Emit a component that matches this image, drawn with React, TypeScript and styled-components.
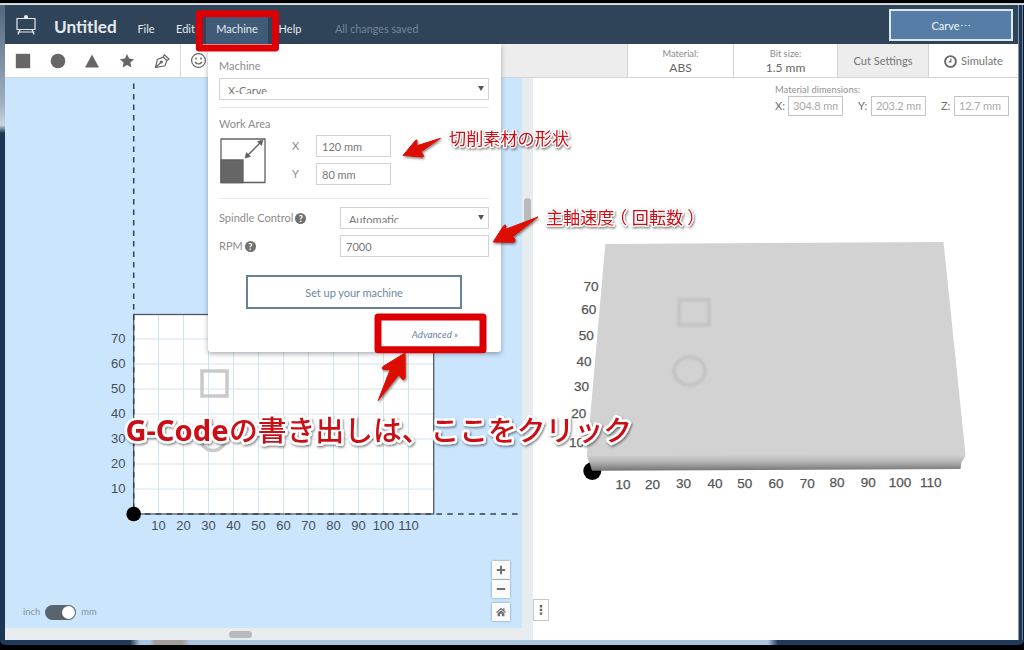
import React from "react";
import styled, { createGlobalStyle, css } from "styled-components";

const GlobalStyle = createGlobalStyle`
  * { box-sizing: border-box; }
  body { margin: 0; background: #000; overflow: hidden; }
`;

const Desktop = styled.div`
  position: relative;
  width: 1024px;
  height: 650px;
  padding: 3px 0 5px;
  background: #000;
  font-family: Lato, sans-serif;
  color: #777;
`;

const WindowFrame = styled.div`
  height: 642px;
  padding: 2px 6px 5px 5px;
  border-radius: 0 0 5px 5px;
  background:
    linear-gradient(#b9c6d0, #e2e6e8) top / 100% 2px no-repeat,
    linear-gradient(90deg, #1f3a5a 0 130px, #a9c5e3 140px 150px, #a39c9a 155px 182px, #a9c5e3 190px 768px, #1f3a5a 778px) bottom / 100% 5px no-repeat,
    linear-gradient(#50667c, #9db0c0 100px, #cbd5dc 122px, #1c3654 130px) left / 5px 100% no-repeat,
    linear-gradient(90deg, #8199b3 0 1px, #1c3654 1px 4px, #6f87a2 4px 5px, #0b1728 5px) right / 6px 100% no-repeat;
`;

const AppWindow = styled.div`
  display: flex;
  flex-direction: column;
  height: 635px;
  background: #fff;
`;

const Header = styled.header`
  display: flex;
  align-items: center;
  height: 39px;
  padding: 0 5px 0 11px;
  background: #2f4359;
  color: #e4e9ee;
`;

const ProjectTitle = styled.h1`
  width: 73px;
  margin: 5px 0 0 18px;
  font-size: 17.2px;
  font-weight: 700;
  line-height: 22px;
  white-space: nowrap;
`;

const MenuItem = styled.div<{ $width: number; $open?: boolean }>`
  position: relative;
  width: ${(p) => p.$width}px;
  height: 27px;
  margin-top: 12px;
  font-size: 11px;
  line-height: 23px;
  text-align: center;
  background: ${(p) => (p.$open ? "#3f5b78" : "transparent")};
`;

const SaveState = styled.span`
  flex: 1;
  margin: 8px 0 0 23px;
  font-size: 10.8px;
  color: #72869b;
`;

const CarveButton = styled.button`
  width: 124px;
  height: 32px;
  padding: 2px 0 0;
  border: 2px solid #dfe7ee;
  background: #557da5;
  color: #f3f6f9;
  font: 11px Lato, sans-serif;
`;

const Toolbar = styled.div`
  display: flex;
  height: 34px;
  border-bottom: 1px solid #d4d4d4;
  background: #ededed;
`;

const ToolGroup = styled.div<{ $width: number }>`
  display: flex;
  align-items: center;
  gap: 18.7px;
  width: ${(p) => p.$width}px;
  padding: 1px 0 0 10px;
  border-right: 1px solid #d8d8d8;
  background: #fff;
  svg { flex: none; }
`;

const Filler = styled.div`
  flex: 1;
`;

const InfoCell = styled.div<{ $width: number; $muted?: boolean }>`
  display: flex;
  flex-direction: column;
  align-items: center;
  justify-content: center;
  width: ${(p) => p.$width}px;
  padding-top: 1px;
  border-left: 1px solid #d4d4d4;
  background: ${(p) => (p.$muted ? "#ededed" : "#fff")};
  font-size: 11.1px;
  line-height: 14px;
  color: #757575;
`;

const CellCaption = styled.span`
  font-size: 9.3px;
  color: #8a8a8a;
`;

const CellValue = styled.span`
  font-size: 12px;
  color: #666;
`;

const InlineLabel = styled.span`
  display: flex;
  align-items: center;
  gap: 4px;
`;

const Workspace = styled.main`
  display: flex;
  height: 562px;
`;

const DesignPane = styled.section`
  display: grid;
  grid-template: 550px 12px / 517px 11px;
  width: 528px;
  background: #e8ecef;
`;

const Canvas = styled.div`
  position: relative;
  background: #cbe5fd;
  svg { display: block; }
`;

const Track = styled.div<{ $vertical?: boolean }>`
  ${(p) =>
    p.$vertical
      ? css`padding: 120px 2px 0;`
      : css`padding: 3px 0 0 224px;`}
`;

const Thumb = styled.div<{ $vertical?: boolean }>`
  width: ${(p) => (p.$vertical ? 7 : 23)}px;
  height: ${(p) => (p.$vertical ? 25 : 7)}px;
  border-radius: 4px;
  background: #b8babc;
`;

const UnitSwitch = styled.div`
  position: absolute;
  left: 18px;
  bottom: 7px;
  display: flex;
  align-items: center;
  gap: 5px;
  height: 18px;
  font-size: 9.4px;
  line-height: 16px;
  color: #8894a0;
`;

const Pill = styled.span`
  display: flex;
  justify-content: flex-end;
  align-items: center;
  width: 31px;
  height: 15px;
  padding-right: 1.5px;
  border-radius: 8px;
  background: #59646e;
`;

const Knob = styled.span`
  width: 13px;
  height: 13px;
  border-radius: 50%;
  background: #fff;
`;

const ZoomControls = styled.div`
  position: absolute;
  right: 12px;
  bottom: 7px;
  display: flex;
  flex-direction: column;
  width: 18px;
`;

const ZoomButton = styled.button<{ $gap?: number }>`
  display: flex;
  align-items: center;
  justify-content: center;
  width: 18px;
  height: 18px;
  margin: 0 0 ${(p) => p.$gap ?? 0}px;
  padding: 0;
  border: 0;
  background: #fafafa;
  box-shadow: 0 0 2px rgba(70, 85, 100, 0.65);
`;

const PreviewPane = styled.section`
  position: relative;
  flex: 1;
  background: #fff;
`;

const Scene = styled.svg`
  display: block;
  width: 485px;
  height: 430px;
`;

const Dimensions = styled.div`
  height: 52px;
  padding: 6px 9px 0 242px;
  font-size: 9.4px;
  line-height: 12px;
  color: #929292;
`;

const DimensionRow = styled.div`
  display: flex;
  justify-content: space-between;
`;

const Dimension = styled.label`
  display: flex;
  align-items: center;
  justify-content: space-between;
  width: 68px;
  font-size: 11px;
  color: #707070;
`;

const DimensionBox = styled.span`
  width: 55px;
  height: 20px;
  padding-left: 4px;
  border: 1px solid #c4c4c4;
  font-size: 11px;
  line-height: 18px;
  letter-spacing: -0.1px;
  color: #aaa;
  white-space: nowrap;
  span { display: block; width: 45px; overflow: hidden; }
`;

const PanelHandle = styled.button`
  position: absolute;
  left: 0;
  bottom: 19px;
  display: flex;
  align-items: center;
  justify-content: center;
  width: 16px;
  height: 22px;
  padding: 0;
  border: 1px solid #c9c9c9;
  background: #fff;
`;

const MachineMenu = styled.div`
  position: absolute;
  z-index: 2;
  top: 27px;
  left: 2px;
  width: 293px;
  height: 308px;
  padding: 0 12px 0 11px;
  border-radius: 0 0 3px 3px;
  background: #fff;
  box-shadow: 0 2px 5px rgba(40, 55, 75, 0.4);
  color: #8c8c8c;
  font-size: 11px;
  line-height: 14px;
  text-align: left;
`;

const GroupLabel = styled.div<{ $height: number; $top: number }>`
  display: flex;
  align-items: center;
  height: ${(p) => p.$height}px;
  padding-top: ${(p) => p.$top}px;
`;

const Rule = styled.hr<{ $top: number; $bottom: number }>`
  height: 1px;
  margin: ${(p) => p.$top}px 0 ${(p) => p.$bottom}px;
  border: 0;
  background: #e9e9e9;
`;

const Field = styled.div<{ $width: number }>`
  width: ${(p) => p.$width}px;
  height: 22px;
  padding-left: 5px;
  border: 1px solid #d2d2d2;
  font-size: 11px;
  line-height: 21px;
  color: #777;
`;

const SelectField = styled(Field)`
  display: flex;
  justify-content: space-between;
  padding: 5px 4px 0 8px;
  color: #777;
`;

const SelectText = styled.span`
  height: 10px;
  overflow: hidden;
  line-height: 14px;
`;

const Caret = styled.span`
  width: 0;
  height: 0;
  margin-top: 2px;
  border: 3px solid transparent;
  border-top: 5px solid #555;
  border-bottom: 0;
`;

const AreaRow = styled.div`
  display: flex;
  height: 50px;
  padding-left: 1px;
`;

const AreaFields = styled.div`
  display: grid;
  grid-template-columns: 24px 75px;
  align-items: center;
  gap: 6px 0;
  margin-left: 26px;
`;

const SpindleGrid = styled.div`
  display: grid;
  grid-template-columns: 121px 149px;
  row-gap: 6px;
  align-items: center;
`;

const HelpBadge = styled.span`
  width: 11px;
  height: 11px;
  border-radius: 50%;
  background: #707070;
  color: #fff;
  font-size: 9px;
  font-weight: 900;
  line-height: 11px;
  text-align: center;
`;

const HelpLabel = styled.span`
  display: flex;
  align-items: center;
  gap: 2px;
`;

const SetupButton = styled.button`
  display: block;
  width: 216px;
  height: 34px;
  margin: 18px 0 0 27px;
  padding: 0;
  border: 2px solid #64829c;
  background: #fff;
  color: #6c88a2;
  font: 11px Lato, sans-serif;
  letter-spacing: -0.04px;
`;

const AdvancedLink = styled.div`
  margin: 18px 31px 0 0;
  font-size: 9.8px;
  font-style: italic;
  text-align: right;
  color: #6a869e;
`;

const Annotations = styled.svg`
  position: absolute;
  z-index: 5;
  inset: 0;
  pointer-events: none;
`;

const Note = styled.text`
  font-family: "Noto Sans", "Noto Sans CJK JP", sans-serif;
  fill: #cb1118;
  stroke: #fff;
  stroke-linejoin: round;
  paint-order: stroke;
`;

const rulerX = [10, 20, 30, 40, 50, 60, 70, 80, 90, 100, 110];
const rulerY = [10, 20, 30, 40, 50, 60, 70];

const sceneX: [number, number, number][] = [
  [10, 623, 489.5], [20, 652.5, 489.3], [30, 683.5, 489], [40, 715, 489], [50, 744.7, 488.6], [60, 776, 488.4],
  [70, 807.3, 488.2], [80, 837, 488], [90, 868.3, 487.8], [100, 900, 487.5], [110, 930.7, 487.3],
];
const sceneY: [number, number, number][] = [
  [70, 591.5, 291], [60, 589.2, 314.5], [50, 586.8, 340], [40, 584.4, 366], [30, 582, 391.5], [20, 579.2, 418.5], [10, 577, 447],
];

function Logo() {
  return (
    <svg width="20" height="22" viewBox="0 0 20 22" fill="none" stroke="#e4e9ee" strokeWidth="1.2">
      <path d="M1 4.5h18v11H1z M8 4.5c.8-.3.8-2 1-2.6h2c.2.6.2 2.3 1 2.6 M1.5 18h17M4 15.5l-2 5M16 15.5l2 5" />
      <path d="M8.5 3.5h3" strokeWidth="3" />
    </svg>
  );
}

function ShapeTools() {
  return (
    <ToolGroup $width={176}>
      <svg width="16" height="16"><path fill="#666" d="M.8.8h14.4v14.4H.8z" /></svg>
      <svg width="16" height="16"><circle cx="8" cy="8" r="7.3" fill="#666" /></svg>
      <svg width="16" height="16"><path fill="#666" d="M8 1.5 15 14.5H1z" /></svg>
      <svg width="16" height="16"><path fill="#666" d="m8 1 2.1 4.6 5 .6-3.7 3.4 1 5L8 12.1l-4.4 2.5 1-5L.9 6.2l5-.6z" /></svg>
      <svg width="16" height="16" fill="none" stroke="#666" strokeWidth="1.2">
        <path d="M1.5 14.5 3.4 6.4 9.3 4 10.3 1.7 15 6 12.8 7.7 11 12.8z M9.3 4l3.5 3.7 M1.5 14.5l5-4.8" />
        <circle cx="7.3" cy="9" r="1" fill="#666" />
      </svg>
    </ToolGroup>
  );
}

function DesignCanvas() {
  return (
    <svg width="517" height="550" viewBox="5 78 517 550" fontFamily="Liberation Sans, sans-serif" fontSize="13" fill="#454f59">
      <rect x="134" y="314.5" width="300" height="200" fill="#fff" />
      <g stroke="#d3e4ef">
        {rulerX.map((v) => <path key={v} d={`M${133.5 + v * 2.5} 315v199`} />)}
        {rulerY.map((v) => <path key={v} d={`M134 ${514 - v * 2.5}h300`} />)}
      </g>
      <rect x="133.7" y="314.5" width="300" height="199.5" fill="none" stroke="#4b5967" strokeWidth="1.3" />
      <path d="M133.7 83.5V514" stroke="#35414e" strokeWidth="1.5" strokeDasharray="5.5 5" />
      <path d="M134 514h388" stroke="#35414e" strokeWidth="1.7" strokeDasharray="5.6 5.2" />
      <rect x="202" y="371" width="25" height="25" fill="none" stroke="#c9c9c9" strokeWidth="3.5" />
      <circle cx="213" cy="438" r="12.5" fill="none" stroke="#c9c9c9" strokeWidth="3.5" />
      {rulerX.map((v) => <text key={v} x={133.5 + v * 2.5} y="529.5" textAnchor="middle">{v}</text>)}
      {rulerY.map((v) => <text key={v} x="125.5" y={518 - v * 2.5} textAnchor="end">{v}</text>)}
      <circle cx="133.7" cy="514" r="7.3" fill="#000" />
    </svg>
  );
}

function BoardScene() {
  return (
    <Scene viewBox="533 130 485 430" fontFamily="Liberation Sans, sans-serif" fontSize="13.5" fill="#555" stroke="#555" strokeWidth=".25">
      <defs>
        <linearGradient id="edge" x1="0" x2="0" y1="0" y2="1">
          <stop offset="0" stopColor="#d2d2d2" />
          <stop offset=".45" stopColor="#b4b4b4" />
          <stop offset="1" stopColor="#737373" />
        </linearGradient>
        <filter id="soft"><feGaussianBlur stdDeviation=".8" /></filter>
      </defs>
      <circle cx="592.3" cy="471" r="9" fill="#000" stroke="none" />
      <path d="M605.3 244 943.5 242 965.5 454.5 960.5 463 592 464 586.8 456z" fill="#d2d2d2" stroke="none" />
      <path d="M586.8 456 965.5 454.5Q965 458 961.5 462L960.5 469 592 470.7 590 464z" fill="url(#edge)" stroke="none" />
      <g fill="none" stroke="#c2c2c2" strokeWidth="3.4" filter="url(#soft)">
        <path d="M679.5 299.7h29.5l.3 25h-30.5z" />
        <ellipse cx="689.6" cy="371" rx="15.5" ry="14" />
      </g>
      {sceneX.map(([v, x, y]) => <text key={v} x={x} y={y - 0.7} textAnchor="middle">{v}</text>)}
      {sceneY.map(([v, x, y]) => <text key={v} x={x - 0.5} y={y - 0.5} textAnchor="middle">{v}</text>)}
    </Scene>
  );
}

function MachinePanel() {
  return (
    <MachineMenu>
      <GroupLabel $height={34} $top={9}>Machine</GroupLabel>
      <SelectField $width={270}><SelectText>X-Carve</SelectText><Caret /></SelectField>
      <Rule $top={7} $bottom={0} />
      <GroupLabel $height={27} $top={5}>Work Area</GroupLabel>
      <AreaRow>
        <svg width="46" height="50" fill="none" stroke="#606060" strokeWidth="1.3">
          <path d="M1 4h44v43.5H1z" />
          <path d="M1 25h22v22.5H1z" fill="#666" />
          <path d="m27 21 14-14" />
          <path d="m25 23 1.5-5.5 4 4zM43 5l-5.5 1.5 4 4z" fill="#606060" strokeWidth=".6" />
        </svg>
        <AreaFields>
          <span>X</span><Field $width={75}>120 mm</Field>
          <span>Y</span><Field $width={75}>80 mm</Field>
        </AreaFields>
      </AreaRow>
      <Rule $top={13} $bottom={8} />
      <SpindleGrid>
        <HelpLabel>Spindle Control <HelpBadge>?</HelpBadge></HelpLabel>
        <SelectField $width={149}><SelectText>Automatic</SelectText><Caret /></SelectField>
        <HelpLabel>RPM <HelpBadge>?</HelpBadge></HelpLabel>
        <Field $width={149}>7000</Field>
      </SpindleGrid>
      <SetupButton>Set up your machine</SetupButton>
      <AdvancedLink>Advanced »</AdvancedLink>
    </MachineMenu>
  );
}

function Callouts() {
  return (
    <Annotations width="1024" height="650">
      <defs>
        <filter id="shade" x="-10%" y="-20%" width="120%" height="150%">
          <feDropShadow dx="1" dy="1.5" stdDeviation="1" floodColor="#000" floodOpacity=".5" />
        </filter>
      </defs>
      <g fill="none" stroke="#dc0005" strokeWidth="7" strokeLinejoin="round">
        <rect x="199.3" y="13.7" width="76.2" height="34.3" />
        <rect x="378" y="317" width="105" height="32.7" />
      </g>
      <g fill="#dd0806" stroke="#dd0806" strokeLinejoin="round" filter="url(#shade)">
        <path d="M403.2 155.3 415.5 140.5Q417 139 417 141L416.8 145.8 440.5 138.3 420.8 151.8 423.2 155Q424 157 422 157.1z" />
        <path d="M493.2 242 503.5 226Q505.5 223.5 506 226.5L505.2 229.5 538 217 512.8 236.5 515 239.5Q515.5 242 513 242.2z" />
        <path d="M405 353 383 366.5Q381 369.3 384.3 369.6L390.3 369.4 378.2 400.5 398.8 374.8 402 379Q405 380.5 405.2 377z" />
      </g>
      <g filter="url(#shade)">
        <Note x="449" y="145" fontSize="17.1" strokeWidth="2.5" textLength="120">切削素材の形状</Note>
        <Note y="223.5" fontSize="17.1" strokeWidth="2.5">
          <tspan x="546">主軸速度</tspan>
          <tspan x="610">（</tspan>
          <tspan x="631.8">回転数</tspan>
          <tspan x="687.3">）</tspan>
        </Note>
        <Note x="125.5" y="441" fontSize="28" strokeWidth="5" fontWeight="700" textLength="103" lengthAdjust="spacingAndGlyphs">G-Code</Note>
        <Note x="229" y="441" fontSize="28.8" strokeWidth="5" fontWeight="500" textLength="403">の書き出しは、ここをクリック</Note>
      </g>
    </Annotations>
  );
}

export default function App() {
  return (
    <Desktop>
      <GlobalStyle />
      <WindowFrame>
        <AppWindow>
          <Header>
            <Logo />
            <ProjectTitle>Untitled</ProjectTitle>
            <MenuItem $width={38}>File</MenuItem>
            <MenuItem $width={41}>Edit</MenuItem>
            <MenuItem $width={62} $open>Machine<MachinePanel /></MenuItem>
            <MenuItem $width={44}>Help</MenuItem>
            <SaveState>All changes saved</SaveState>
            <CarveButton>Carve⋯</CarveButton>
          </Header>
          <Toolbar>
            <ShapeTools />
            <ToolGroup $width={60}>
              <svg width="16" height="16" fill="none" stroke="#666" strokeWidth="1.2">
                <circle cx="7.5" cy="7.5" r="6.9" />
                <path d="M4 9q3.5 4 7 0" />
                <path d="M5 4.5v2M10 4.5v2" strokeWidth="1.5" />
              </svg>
            </ToolGroup>
            <Filler />
            <InfoCell $width={106}><CellCaption>Material:</CellCaption><CellValue>ABS</CellValue></InfoCell>
            <InfoCell $width={104}><CellCaption>Bit size:</CellCaption><CellValue>1.5 mm</CellValue></InfoCell>
            <InfoCell $width={91} $muted>Cut Settings</InfoCell>
            <InfoCell $width={90}>
              <InlineLabel>
                <svg width="13" height="13" fill="none" stroke="#666"><circle cx="6.5" cy="6.5" r="5.4" strokeWidth="1.9" /><path d="M6.8 3.5v3.3H4.5" strokeWidth="1.2" /></svg>
                Simulate
              </InlineLabel>
            </InfoCell>
          </Toolbar>
          <Workspace>
            <DesignPane>
              <Canvas>
                <DesignCanvas />
                <UnitSwitch>inch<Pill><Knob /></Pill>mm</UnitSwitch>
                <ZoomControls>
                  <ZoomButton $gap={1}><svg width="10" height="10"><path d="M5 .8v8.4M.8 5h8.4" stroke="#707070" strokeWidth="2" /></svg></ZoomButton>
                  <ZoomButton $gap={5}><svg width="10" height="10"><path d="M.8 5h8.4" stroke="#707070" strokeWidth="2" /></svg></ZoomButton>
                  <ZoomButton><svg width="10" height="10"><path d="M5 .8 0 5.2l.8.8L5 2.4 9.2 6l.8-.8-1.5-1.3V1.3H7.3v1.5zM5 3.4 1.6 6.3v3h2.5V6.8h1.8v2.5h2.5v-3z" fill="#707070" /></svg></ZoomButton>
                </ZoomControls>
              </Canvas>
              <Track $vertical><Thumb $vertical /></Track>
              <Track><Thumb /></Track>
            </DesignPane>
            <PreviewPane>
              <Dimensions>
                Material dimensions:
                <DimensionRow>
                  <Dimension>X:<DimensionBox><span>304.8 mm</span></DimensionBox></Dimension>
                  <Dimension>Y:<DimensionBox><span>203.2 mm</span></DimensionBox></Dimension>
                  <Dimension>Z:<DimensionBox><span>12.7 mm</span></DimensionBox></Dimension>
                </DimensionRow>
              </Dimensions>
              <BoardScene />
              <PanelHandle><svg width="4" height="10" fill="#666"><path d="M.8 0h2.4v2.4H.8zM.8 3.7h2.4v2.4H.8zM.8 7.4h2.4v2.4H.8z" /></svg></PanelHandle>
            </PreviewPane>
          </Workspace>
        </AppWindow>
      </WindowFrame>
      <Callouts />
    </Desktop>
  );
}
